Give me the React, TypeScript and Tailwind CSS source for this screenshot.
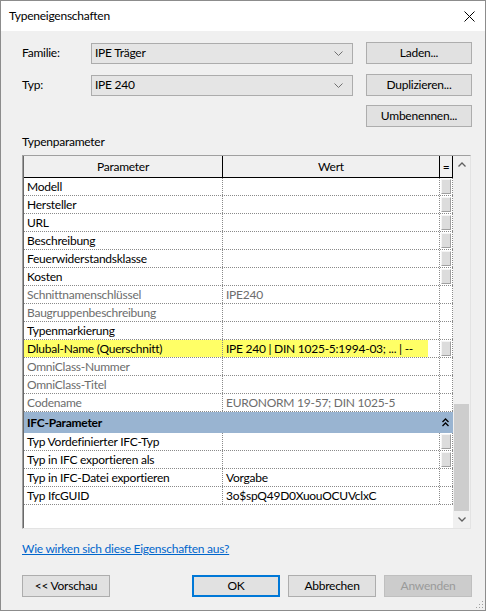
import React from 'react';

type Row = { p: string; v?: string; box?: boolean; gray?: boolean; hl?: boolean };

const rows: Row[] = [
  { p: 'Modell', box: true },
  { p: 'Hersteller', box: true },
  { p: 'URL', box: true },
  { p: 'Beschreibung', box: true },
  { p: 'Feuerwiderstandsklasse', box: true },
  { p: 'Kosten', box: true },
  { p: 'Schnittnamenschlüssel', v: 'IPE240', gray: true },
  { p: 'Baugruppenbeschreibung', gray: true },
  { p: 'Typenmarkierung' },
  { p: 'Dlubal-Name (Querschnitt)', v: 'IPE 240 | DIN 1025-5:1994-03; ... | --', box: true, hl: true },
  { p: 'OmniClass-Nummer', gray: true },
  { p: 'OmniClass-Titel', gray: true },
  { p: 'Codename', v: 'EURONORM 19-57; DIN 1025-5', gray: true },
];

const ifcRows: Row[] = [
  { p: 'Typ Vordefinierter IFC-Typ', box: true },
  { p: 'Typ in IFC exportieren als', box: true },
  { p: 'Typ in IFC-Datei exportieren', v: 'Vorgabe' },
  { p: 'Typ IfcGUID', v: '3o$spQ49D0XuouOCUVclxC' },
];

function Chevron({ up }: { up?: boolean }) {
  return (
    <svg width="8" height="5" viewBox="0 0 8 5">
      {up ? (
        <path d="M0.5 4.5 L4 1 L7.5 4.5" fill="none" stroke="#606060" strokeWidth="1.3" />
      ) : (
        <path d="M0.5 0.5 L4 4 L7.5 0.5" fill="none" stroke="#606060" strokeWidth="1.3" />
      )}
    </svg>
  );
}

function TableRow({ r }: { r: Row }) {
  const txt = r.gray ? 'text-[#6d6d6d]' : 'text-black';
  return (
    <div className="flex h-[18px] border-b border-dotted border-[#8a8a8a]">
      <div
        className={`w-[199px] shrink-0 border-r border-dotted border-[#8a8a8a] pl-[3px] leading-[17px] whitespace-nowrap overflow-hidden ${txt} ${
          r.hl ? 'bg-[#ffff66]' : ''
        }`}
      >
        {r.p}
      </div>
      <div className={`w-[217px] shrink-0 border-r border-dotted border-[#8a8a8a] leading-[17px] whitespace-nowrap overflow-hidden ${txt}`}>
        {r.hl ? (
          <div className="w-[205px] h-full bg-[#ffff66] pl-[3px]">{r.v}</div>
        ) : (
          <div className="pl-[3px]">{r.v ?? ''}</div>
        )}
      </div>
      <div className="w-[13px] shrink-0 border-r border-dotted border-[#8a8a8a] flex items-center justify-center">
        {r.box && (
          <div className="w-[10px] h-[15px] bg-[#dcdcdc] border border-t-[#f4f4f4] border-l-[#f4f4f4] border-r-[#a0a0a0] border-b-[#a0a0a0]" />
        )}
      </div>
    </div>
  );
}

function Btn({ children, w = 'w-[106px]' }: { children: React.ReactNode; w?: string }) {
  return (
    <div className={`${w} h-[22px] shrink-0 bg-[#e1e1e1] border border-[#adadad] flex items-center justify-center text-black`}>
      {children}
    </div>
  );
}

function Select({ value }: { value: string }) {
  return (
    <div className="w-[262px] h-[21px] shrink-0 bg-[#e5e5e5] border border-[#acacac] flex items-center justify-between pl-[3px] pr-[9px]">
      <span>{value}</span>
      <svg width="9" height="5" viewBox="0 0 9 5">
        <path d="M0.5 0.5 L4.5 4.5 L8.5 0.5" fill="none" stroke="#707070" strokeWidth="1" />
      </svg>
    </div>
  );
}

export default function App() {
  return (
    <div
      className="w-[486px] h-[611px] border border-[#8c8c8c] bg-[#f0f0f0] flex flex-col text-[12px] tracking-[-0.25px] text-black overflow-hidden relative"
      style={{ fontFamily: 'Lato, "Noto Sans", sans-serif' }}
    >
      {/* Title bar */}
      <div className="h-[30px] bg-white flex items-center justify-between pl-[8px] pr-[10px] shrink-0">
        <span className="text-[12px]">Typeneigenschaften</span>
        <svg width="11" height="11" viewBox="0 0 11 11">
          <path d="M0.5 0.5 L10.5 10.5 M10.5 0.5 L0.5 10.5" stroke="#000" strokeWidth="1" />
        </svg>
      </div>

      <div className="flex flex-col pl-[21px] pr-[13px]">
        {/* Familie */}
        <div className="flex items-center mt-[11px] h-[22px]">
          <div className="w-[69px] shrink-0">Familie:</div>
          <Select value="IPE Träger" />
          <div className="ml-[13px]">
            <Btn>Laden...</Btn>
          </div>
        </div>
        {/* Typ */}
        <div className="flex items-center mt-[10px] h-[22px]">
          <div className="w-[69px] shrink-0">Typ:</div>
          <Select value="IPE 240" />
          <div className="ml-[13px]">
            <Btn>Duplizieren...</Btn>
          </div>
        </div>
        <div className="flex justify-end mt-[9px] h-[22px]">
          <Btn>Umbenennen...</Btn>
        </div>

        <div className="mt-[7px] h-[16px] leading-[16px]">Typenparameter</div>

        {/* Table */}
        <div className="mt-[5px] w-[449px] h-[374px] border-t border-l border-[#a0a0a0] border-r border-r-[#e3e3e3] border-b border-b-[#e3e3e3] flex">
          <div className="flex-1 border-l border-[#696969] bg-white flex">
            <div className="w-[429px] flex flex-col">
              {/* header */}
              <div className="flex h-[22px] bg-[#f0f0f0] border-b border-black shrink-0">
                <div className="w-[199px] shrink-0 border-r border-black flex items-center justify-center">Parameter</div>
                <div className="w-[217px] shrink-0 border-r border-black flex items-center justify-center">Wert</div>
                <div className="w-[13px] shrink-0 border-r border-black flex items-center justify-center">=</div>
              </div>
              {rows.map((r) => (
                <TableRow key={r.p} r={r} />
              ))}
              <div className="h-[21px] bg-[#99b4d1] flex items-center justify-between pl-[3px] pr-[4px] shrink-0">
                <span className="font-bold">IFC-Parameter</span>
                <svg width="7" height="9" viewBox="0 0 7 9">
                  <path d="M0.5 4 L3.5 1 L6.5 4 M0.5 8 L3.5 5 L6.5 8" fill="none" stroke="#000" strokeWidth="1.3" />
                </svg>
              </div>
              {ifcRows.map((r) => (
                <TableRow key={r.p} r={r} />
              ))}
              <div className="flex-1" />
            </div>
            {/* scrollbar */}
            <div className="w-[17px] bg-[#f0f0f0] flex flex-col">
              <div className="h-[17px] flex items-center justify-center shrink-0">
                <Chevron up />
              </div>
              <div className="flex-1 flex flex-col justify-end">
                <div className="mx-[1px] h-[107px] bg-[#cdcdcd]" />
              </div>
              <div className="h-[17px] flex items-center justify-center shrink-0">
                <Chevron />
              </div>
            </div>
          </div>
        </div>

        <div className="mt-[12px] h-[16px] leading-[16px]">
          <span className="text-[#0066cc] underline">Wie wirken sich diese Eigenschaften aus?</span>
        </div>

        <div className="mt-[18px] flex justify-between h-[22px]">
          <Btn w="w-[88px]">&lt;&lt; Vorschau</Btn>
          <div className="flex gap-[8px]">
            <div className="w-[88px] h-[22px] bg-[#e1e1e1] border-2 border-[#0078d7] flex items-center justify-center">OK</div>
            <Btn w="w-[88px]">Abbrechen</Btn>
            <div className="w-[88px] h-[22px] bg-[#cccccc] border border-[#bfbfbf] flex items-center justify-center text-[#9a9a9a]">
              Anwenden
            </div>
          </div>
        </div>
      </div>

      {/* resize grip */}
      <svg className="absolute right-[1px] bottom-[1px]" width="8" height="8" viewBox="0 0 8 8">
        <rect x="6" y="0" width="1" height="1" fill="#a0a0a0" />
        <rect x="3" y="3" width="1" height="1" fill="#a0a0a0" />
        <rect x="6" y="3" width="1" height="1" fill="#a0a0a0" />
        <rect x="0" y="6" width="1" height="1" fill="#a0a0a0" />
        <rect x="3" y="6" width="1" height="1" fill="#a0a0a0" />
        <rect x="6" y="6" width="1" height="1" fill="#a0a0a0" />
      </svg>
    </div>
  );
}
